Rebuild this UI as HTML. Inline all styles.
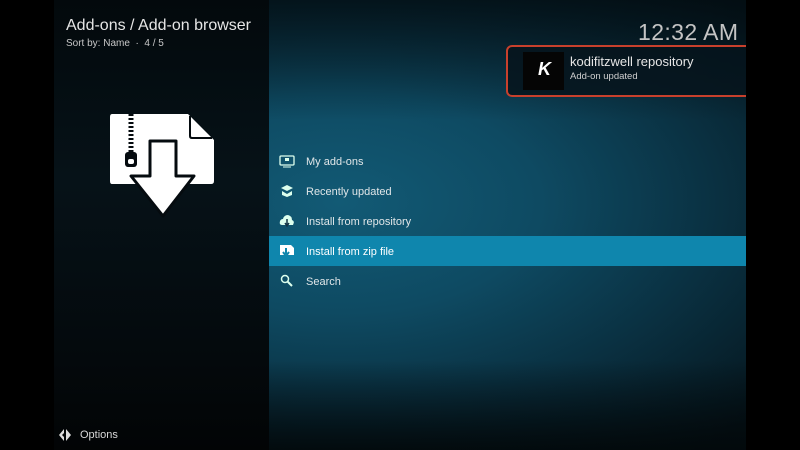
<!DOCTYPE html>
<html><head><meta charset="utf-8"><style>
body{margin:0;width:800px;height:450px;background:#000;overflow:hidden;font-family:"Liberation Sans",sans-serif;position:relative}
.left{position:absolute;left:54px;top:0;width:215px;height:450px;background:linear-gradient(180deg,#03090c 0%,#061218 40%,#04090c 80%,#020405 100%)}
.right{position:absolute;left:269px;top:0;width:477px;height:450px;background:radial-gradient(ellipse 120% 70% at 15% 45%,#125a75 0%,#0e4a62 35%,#0a3142 65%,#05141b 100%)}
.rtop{position:absolute;left:269px;top:0;width:477px;height:120px;background:linear-gradient(180deg,rgba(2,10,14,.75),rgba(2,10,14,0))}
.rbot{position:absolute;left:269px;top:360px;width:477px;height:90px;background:linear-gradient(180deg,rgba(2,8,10,0),rgba(2,8,10,.9))}
.t{position:absolute;color:#e6e6e6;white-space:nowrap}
.item{position:absolute;left:269px;width:477px;height:30px;color:#e0e6e8;font-size:11px;line-height:30px}
.item span{position:absolute;left:37px;top:1px}
.item svg{position:absolute;left:10px;top:8px}
.clip{position:absolute;left:0;top:0;width:746px;height:450px;overflow:hidden}
</style></head><body>
<div class="left"></div><div class="right"></div><div class="rtop"></div><div class="rbot"></div>
<div class="t" style="left:66px;top:17px;font-size:16px">Add-ons / Add-on browser</div>
<div class="t" style="left:66px;top:38px;font-size:10px;color:#c8c8c8">Sort by: Name &nbsp;·&nbsp; 4 / 5</div>
<div class="t" style="left:638px;top:19px;font-size:23px;color:#c4c4c4;letter-spacing:0.4px">12:32 AM</div>
<svg style="position:absolute;left:100px;top:108px" width="124" height="112" viewBox="100 108 124 112">
<path d="M112 114 H188 L214 140 V181 Q214 184 211 184 H112 Q110 184 110 181 V117 Q110 114 112 114Z" fill="#fff"/>
<path d="M190 116 V136 Q190 138 192 138 H212" fill="none" stroke="#050b0f" stroke-width="2"/>
<path d="M131 114 V152" stroke="#050b0f" stroke-width="5" stroke-dasharray="2 2"/>
<rect x="125" y="152" width="12" height="15" rx="3" fill="#050b0f"/>
<rect x="128" y="159" width="6" height="5" rx="2" fill="#fff"/>
<path d="M150 141 H176 V176 H194 L163 216 L131 176 H150Z" fill="#fff" stroke="#050b0f" stroke-width="3" stroke-linejoin="round"/>
</svg>
<div class="clip">
<div style="position:absolute;left:506px;top:45px;width:250px;height:52px;border:2px solid #c8402c;border-radius:6px;box-sizing:border-box;background:rgba(6,20,28,.85)"></div>
</div>
<div style="position:absolute;left:523px;top:52px;width:41px;height:38px;background:#050505"></div>
<div class="t" style="left:538px;top:59px;font-size:18px;font-weight:bold;font-style:italic;color:#fff">K</div>
<div class="t" style="left:570px;top:54px;font-size:13px">kodifitzwell repository</div>
<div class="t" style="left:570px;top:71px;font-size:9.5px;color:#cfcfcf">Add-on updated</div>
<div class="item" style="top:146px"><svg width="16" height="14"><rect x="1" y="2" width="14" height="9" rx="1" fill="none" stroke="#dfe" stroke-width="1.3"/><rect x="6" y="4" width="4" height="3" fill="#dfe"/><path d="M4 13 H12" stroke="#dfe"/></svg><span>My add-ons</span></div>
<div class="item" style="top:176px"><svg width="16" height="14"><path d="M2 4 L8 1 L14 4 L8 7Z M3 7 L8 10 L13 7 V11 L8 13 L3 11Z" fill="#dfe"/></svg><span>Recently updated</span></div>
<div class="item" style="top:206px"><svg width="16" height="14"><path d="M3 11 Q0 11 1 7 Q2 5 4 5 Q5 1 9 1 Q13 2 13 6 Q16 7 14 11Z" fill="#dfe"/><path d="M8 5 V11 M6 9 L8 12 L10 9" stroke="#134" stroke-width="1.5" fill="none"/></svg><span>Install from repository</span></div>
<div class="item" style="top:236px;background:#0f86ad;color:#fff"><svg width="16" height="14"><path d="M1 1 H12 L15 4 V11 H1Z" fill="#fff"/><path d="M7 4 V10 M4 8 L7 12 L10 8" stroke="#0f86ad" stroke-width="2" fill="none"/></svg><span>Install from zip file</span></div>
<div class="item" style="top:266px"><svg width="16" height="14"><circle cx="6" cy="5" r="3.5" fill="none" stroke="#dfe" stroke-width="1.5"/><path d="M8.5 7.5 L13 12" stroke="#dfe" stroke-width="2"/></svg><span>Search</span></div>
<svg style="position:absolute;left:58px;top:428px" width="14" height="14"><path d="M6 1 L1 7 L6 13 L6 9 L4 7 L6 5Z M8 1 L13 7 L8 13Z" fill="#ddd"/></svg>
<div class="t" style="left:80px;top:429px;font-size:11px;color:#d8d8d8">Options</div>
</body></html>
